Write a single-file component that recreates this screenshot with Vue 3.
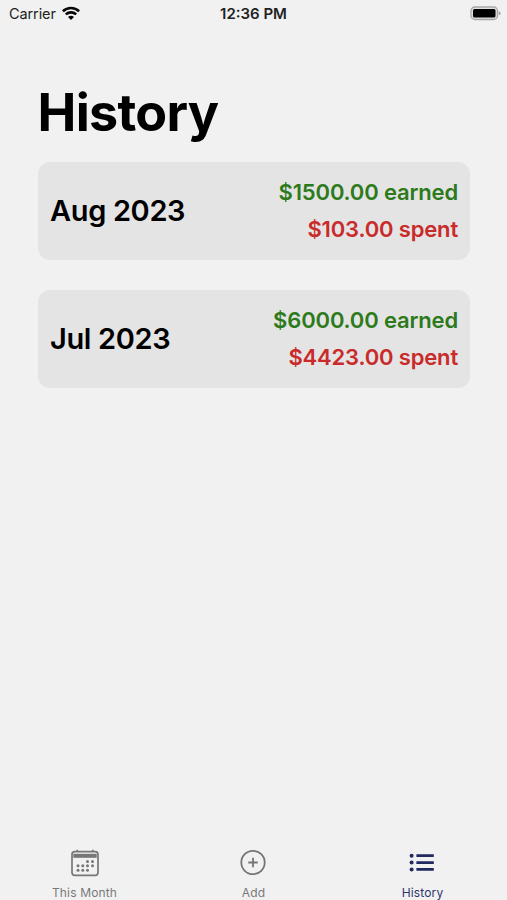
<script setup>
const months = [
  { name: 'Aug 2023', id: 'aug', earned: '$1500.00 earned', spent: '$103.00 spent' },
  { name: 'Jul 2023', id: 'jul', earned: '$6000.00 earned', spent: '$4423.00 spent' },
]
const calendarDots = [
  [87.5, 861.5], [92.5, 861.5],
  [78, 865.8], [82.8, 865.8], [87.5, 865.8], [92.5, 865.8],
  [78, 870.3], [82.8, 870.3], [87.5, 870.3],
].map(([x, y]) => [x - 71, y - 849])
</script>

<template>
  <div class="screen">
    <header class="status">
      <div class="carrier">
        <span>Carrier</span>
        <svg class="wifi" width="18" height="14" viewBox="0 0 18 14" fill="none" stroke="#080808" stroke-width="2.6">
          <path d="M0.9 5.2C5.4 0.9 12.6 0.9 17.1 5.2" />
          <path d="M3.8 8.4C6.7 5.7 11.3 5.7 14.2 8.4" />
          <path d="M9 14L6 11C7.7 9.4 10.3 9.4 12 11Z" fill="#080808" stroke="none" />
        </svg>
      </div>
      <div class="time">12:36 PM</div>
      <svg class="battery" width="31" height="15" viewBox="0 0 31 15">
        <rect x="1" y="1" width="26.5" height="12.5" rx="3.8" fill="#e0e0e0" stroke="#a8a8a8" stroke-width="1.3" />
        <rect x="3" y="3" width="22.5" height="8.5" rx="1.5" fill="#000" />
        <path d="M28.6 5.2Q30.7 5.8 30.7 7.25T28.6 9.3Z" fill="#a5a5a5" />
      </svg>
    </header>

    <main class="content">
      <h1>History</h1>
      <section v-for="m in months" :key="m.id" class="card">
        <h2>{{ m.name }}</h2>
        <div class="amounts">
          <p class="earned">{{ m.earned }}</p>
          <p class="spent">{{ m.spent }}</p>
        </div>
      </section>
    </main>

    <nav class="tabs">
      <a class="tab">
        <svg width="28" height="28" viewBox="0 0 28 28" fill="none" stroke="#777">
          <rect x="1" y="2.6" width="26" height="23.8" rx="2.8" stroke-width="1.7" />
          <path d="M2.3 6.8H25.7" stroke-width="4" />
          <path d="M6.2 0.8V3M21.8 0.8V3" stroke-width="1.7" />
          <circle v-for="(d, i) in calendarDots" :key="i" :cx="d[0]" :cy="d[1]" r="1.5" fill="#777" stroke="none" />
        </svg>
        <span>This Month</span>
      </a>
      <a class="tab">
        <svg class="add-icon" width="28" height="28" viewBox="0 0 28 28" fill="none" stroke="#757575" stroke-width="1.8">
          <circle cx="14" cy="13.5" r="11.7" />
          <path d="M14 8.8V18.2M9.3 13.5H18.7" />
        </svg>
        <span>Add</span>
      </a>
      <a class="tab active">
        <svg class="list-icon" width="28" height="28" viewBox="0 0 28 28" fill="none" stroke="#20285f">
          <path d="M8.4 6.7H25.8M8.4 13.6H25.8M8.4 20.4H25.8" stroke-width="2.7" />
          <g fill="#20285f" stroke="none">
            <circle cx="3.6" cy="6.7" r="2" />
            <circle cx="3.6" cy="13.6" r="2" />
            <circle cx="3.6" cy="20.4" r="2" />
          </g>
        </svg>
        <span>History</span>
      </a>
    </nav>
  </div>
</template>

<style>
body {
  margin: 0;
  background: #f1f1f1;
}
</style>

<style scoped>
.screen {
  display: flex;
  flex-direction: column;
  box-sizing: border-box;
  height: 900px;
  overflow: hidden;
  background: #f1f1f1;
  color: #000;
  font-family: Inter, "Liberation Sans", sans-serif;
}
.status {
  display: grid;
  grid-template-columns: 1fr auto 1fr;
  align-items: center;
  height: 27px;
  padding: 0 6px 0 9px;
  font-size: 14.5px;
  line-height: 27px;
  color: #222;
}
.carrier {
  display: flex;
  align-items: center;
  gap: 6px;
  letter-spacing: -0.1px;
}
.wifi {
  margin-top: -2px;
}
.time {
  margin-right: 3px;
  font-weight: 600;
  font-size: 15px;
}
.battery {
  justify-self: end;
}
.content {
  flex: 1;
  padding: 54px 37px 0 38px;
}
h1 {
  margin: 0 0 18px -0.5px;
  font-size: 52px;
  line-height: 63px;
  font-weight: 700;
  letter-spacing: -0.7px;
}
.card {
  display: flex;
  align-items: center;
  justify-content: space-between;
  box-sizing: border-box;
  height: 97.5px;
  margin-bottom: 30.5px;
  padding: 0 12px;
  border-radius: 12px;
  background: #e4e4e4;
}
h2 {
  margin: 0;
  font-size: 29px;
  line-height: 36px;
  font-weight: 600;
  letter-spacing: -0.35px;
}
.amounts {
  text-align: right;
}
p {
  margin: 0;
  font-size: 22px;
  line-height: 37px;
  font-weight: 600;
  letter-spacing: -0.16px;
}
.earned {
  color: #2d7a1b;
}
.spent {
  color: #c92a2a;
}
.tabs {
  display: grid;
  grid-template-columns: repeat(3, 1fr);
  height: 51px;
}
.tab {
  display: flex;
  flex-direction: column;
  align-items: center;
  gap: 7px;
  color: #7a7a7a;
  font-size: 12px;
  line-height: 17px;
  letter-spacing: 0.15px;
}
.add-icon,
.list-icon {
  margin-right: 2px;
}
.tab.active {
  color: #30366b;
}
</style>
